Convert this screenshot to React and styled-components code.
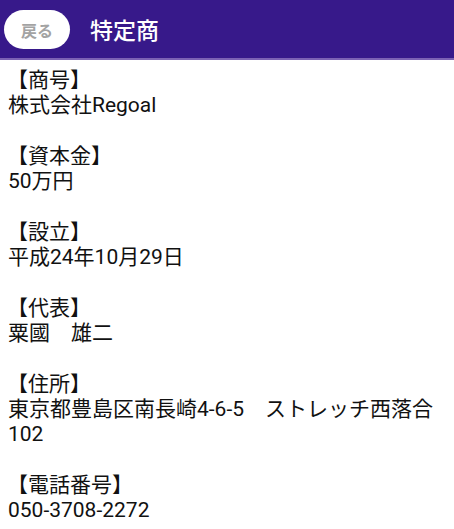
import React from "react";
import styled, { createGlobalStyle } from "styled-components";

const GlobalStyle = createGlobalStyle`
  html, body {
    margin: 0;
    padding: 0;
    background: #ffffff;
  }
  body {
    font-family: Roboto, "Noto Sans CJK JP", sans-serif;
  }
`;

const sections = [
  { label: "商号", lines: ["株式会社Regoal"] },
  { label: "資本金", lines: ["50万円"] },
  { label: "設立", lines: ["平成24年10月29日"] },
  { label: "代表", lines: ["粟國　雄二"] },
  { label: "住所", lines: ["東京都豊島区南長崎4-6-5　ストレッチ西落合", "102"] },
  { label: "電話番号", lines: ["050-3708-2272"] },
];

function App() {
  return (
    <Page>
      <GlobalStyle />
      <Header>
        <BackButton type="button">戻る</BackButton>
        <Title>特定商</Title>
      </Header>
      <Content>
        {sections.map((s) => (
          <Section key={s.label}>
            <Label>【{s.label}】</Label>
            {s.lines.map((line) => (
              <Value key={line}>{line}</Value>
            ))}
          </Section>
        ))}
      </Content>
    </Page>
  );
}

export default App;

const Page = styled.div`
  width: 100%;
  min-height: 100vh;
  background: #ffffff;
`;

const Header = styled.header`
  display: flex;
  align-items: center;
  gap: 20px;
  height: 58px;
  padding: 0 4px;
  background: #37198a;
  border-bottom: 2px solid #7c62b4;
`;

const BackButton = styled.button`
  width: 66px;
  height: 39px;
  border: none;
  border-radius: 20px;
  background: #ffffff;
  color: #a3a3a3;
  font-family: Roboto, "Noto Sans CJK JP", sans-serif;
  font-size: 16px;
  font-weight: 700;
  padding: 0;
  margin-top: 1px;
`;

const Title = styled.h1`
  margin: 0;
  color: #ffffff;
  font-size: 23px;
  font-weight: 500;
  letter-spacing: 0;
`;

const Content = styled.main`
  display: flex;
  flex-direction: column;
  gap: 25.3px;
  padding: 8px 8px 0 8px;
  color: #111111;
  font-size: 21px;
  line-height: 25.3px;
`;

const Section = styled.section`
  display: flex;
  flex-direction: column;
`;

const Label = styled.div`
  margin-left: -1px;
`;

const Value = styled.div`
  white-space: nowrap;
`;
